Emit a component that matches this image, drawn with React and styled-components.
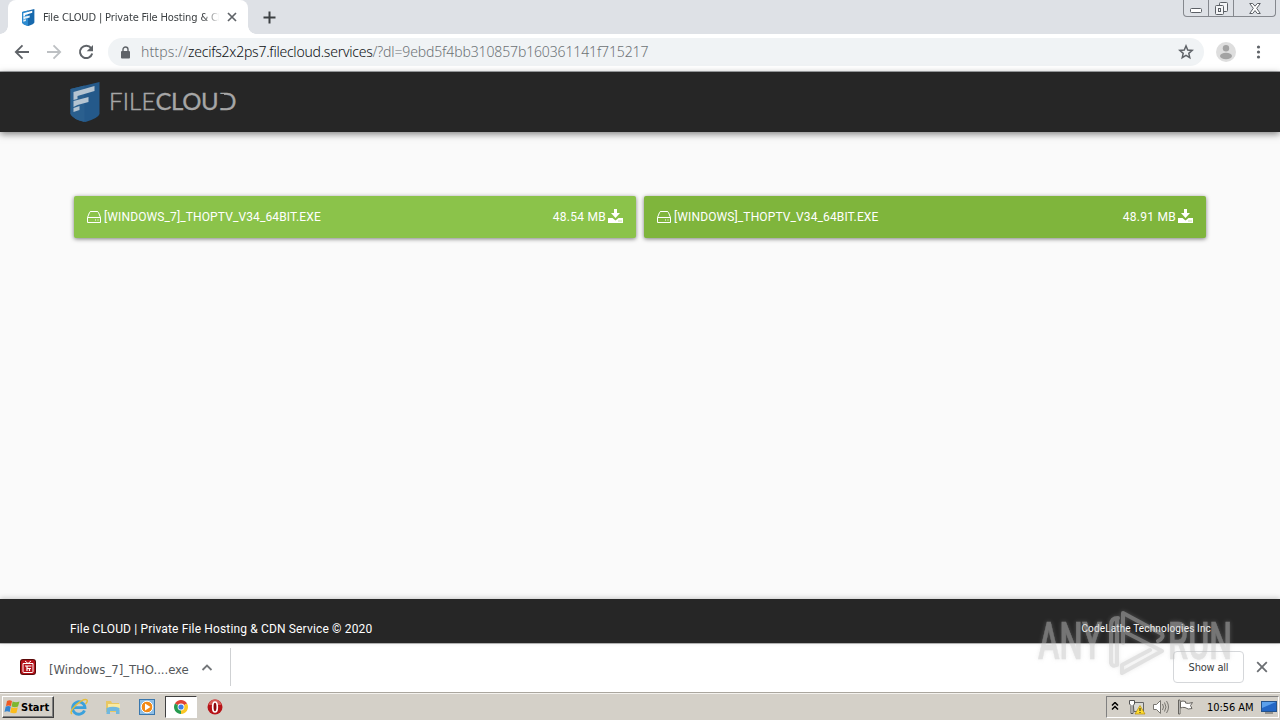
import React from 'react';
import styled, {createGlobalStyle, css} from 'styled-components';

const GlobalStyle = createGlobalStyle`
    * {
        box-sizing: border-box;
    }

    body {
        margin: 0;
        overflow: hidden;
        background-color: #fafafa;
        font-family: "DejaVu Sans Condensed", "DejaVu Sans", sans-serif;
    }

    svg {
        display: block;
        flex: none;
    }
`;

const Screen = styled.div`
    display: flex;
    flex-direction: column;
    width: 1280px;
    height: 720px;
    overflow: hidden;
`;

/* Browser */

const TabStrip = styled.div`
    display: flex;
    flex: none;
    height: 34px;
    padding-left: 8px;
    background-color: #dee1e6;
`;

const Tab = styled.div`
    position: relative;
    display: flex;
    align-items: center;
    width: 240px;
    height: 34px;
    padding: 0 10px 0 13px;
    background-color: #fff;
    border-radius: 8px 8px 0 0;

    &::before,
    &::after {
        content: '';
        position: absolute;
        bottom: 0;
        width: 8px;
        height: 8px;
    }

    &::before {
        left: -8px;
        background: radial-gradient(circle at 0 0, transparent 7.5px, #fff 8px);
    }

    &::after {
        right: -8px;
        background: radial-gradient(circle at 100% 0, transparent 7.5px, #fff 8px);
    }
`;

const TabTitle = styled.div`
    width: 176px;
    margin: 0 8px 0 8px;
    padding-top: 1px;
    overflow: hidden;
    white-space: nowrap;
    font-family: "DejaVu Sans Condensed", sans-serif;
    font-size: 11px;
    letter-spacing: -0.14px;
    line-height: 16px;
    color: #3c4043;
    mask-image: linear-gradient(to right, #000 160px, transparent 178px);
`;

const NewTab = styled.div`
    display: flex;
    align-items: center;
    margin-left: 15px;
`;

const WindowButtons = styled.div`
    display: flex;
    height: 17px;
    margin: 0 4px 0 auto;
    border: 1px solid #85888e;
    border-top: 0;
    border-radius: 0 0 4px 4px;
`;

const WindowButton = styled.div`
    display: flex;
    align-items: center;
    justify-content: center;
    width: ${props => props.$width}px;
    padding-top: ${props => props.$drop || 0}px;

    & + & {
        border-left: 1px solid #85888e;
    }
`;

const Toolbar = styled.div`
    display: flex;
    flex: none;
    align-items: center;
    height: 38px;
    padding: 0 14px 1px;
    background-color: #fff;
    border-bottom: 1px solid #a9abad;
`;

const NavButtons = styled.div`
    display: flex;
    gap: 16px;
    margin-right: 14px;
`;

const AddressBar = styled.div`
    display: flex;
    align-items: center;
    width: 1096px;
    height: 28px;
    padding: 0 10px 0 12px;
    background-color: #f0f3f5;
    border-radius: 14px;
`;

const Url = styled.div`
    margin: 0 auto 0 10px;
    font-family: "Noto Sans", sans-serif;
    font-size: 14px;
    font-weight: 300;
    letter-spacing: -0.13px;
    line-height: 20px;
    white-space: nowrap;
    color: #6d7276;

    b {
        font-weight: 300;
        letter-spacing: -0.24px;
        color: #0d0f12;
    }
`;

const Scheme = styled.span`
    letter-spacing: 0.13px;
`;

const ToolbarEnd = styled.div`
    display: flex;
    align-items: center;
    gap: 14px;
    margin-left: 12px;
`;

/* Page */

const Header = styled.header`
    position: relative;
    display: flex;
    flex: none;
    align-items: center;
    height: 60px;
    padding-left: 69px;
    background-color: #262626;
    box-shadow: 0 2px 7px rgba(0, 0, 0, 0.5);
`;

const Brand = styled.div`
    position: relative;
    margin-left: 9px;
    padding-bottom: 2px;
    font-family: Lato, sans-serif;
    font-size: 24px;
    font-weight: 300;
    letter-spacing: 0.15px;
    line-height: 30px;
    color: #a6a6a6;
    -webkit-text-stroke: 0.5px #a6a6a6;

    b {
        font-weight: 400;
        letter-spacing: -0.4px;
        -webkit-text-stroke-width: 0.3px;
    }
`;

const OpenLetter = styled.b`
    position: relative;

    &::after {
        content: '';
        position: absolute;
        top: 8px;
        left: 0;
        width: 6px;
        height: 14px;
        background-color: #262626;
    }
`;

const Main = styled.main`
    display: flex;
    flex: 1;
    align-items: flex-start;
    gap: 8px;
    padding: 64px 74px 0;
    background-color: #fafafa;
`;

const FileButton = styled.div`
    display: flex;
    align-items: center;
    width: 562px;
    height: 42px;
    padding: 0 13px;
    border-radius: 2px;
    background-color: ${props => props.$active ? '#8bc34a' : '#7fb53c'};
    box-shadow: 0 1px 4px rgba(0, 0, 0, 0.5);
    font-family: Roboto, sans-serif;
    font-size: 12px;
    line-height: 16px;
    color: #fff;
`;

const FileName = styled.span`
    margin: 0 auto 0 3px;
    letter-spacing: 0.12px;
`;

const FileSize = styled.span`
    margin-right: 2px;
    letter-spacing: 0.28px;
`;

const Footer = styled.footer`
    position: relative;
    display: flex;
    flex: none;
    justify-content: space-between;
    height: 44px;
    padding: 22px 69px 0 70px;
    background-color: #262626;
    box-shadow: 0 -1px 5px rgba(0, 0, 0, 0.2);
    font-family: Roboto, sans-serif;
    font-size: 12px;
    line-height: 16px;
    color: #fff;
`;

const Copyright = styled.span`
    letter-spacing: 0.15px;
`;

const Company = styled.span`
    font-size: 10px;
    letter-spacing: 0.15px;
`;

/* Downloads */

const Shelf = styled.div`
    display: flex;
    flex: none;
    align-items: center;
    height: 50px;
    padding: 0 12px 2px 0;
    background-color: #fff;
    border-top: 1px solid #bcbcbc;
    border-bottom: 1px solid #aaa69e;
`;

const Download = styled.div`
    display: flex;
    align-items: center;
    width: 231px;
    height: 38px;
    padding-left: 20px;
    border-right: 1px solid #cfd1d3;
`;

const DownloadName = styled.span`
    width: 140px;
    margin: 4px 12px 0 13px;
    font-family: "DejaVu Sans Condensed", sans-serif;
    font-size: 13px;
    letter-spacing: -0.04px;
    white-space: nowrap;
    color: #55585b;
`;

const ShowAll = styled.div`
    display: flex;
    align-items: center;
    justify-content: center;
    width: 71px;
    height: 32px;
    margin: 0 12px 0 auto;
    border: 1px solid #d5d7da;
    border-radius: 4px;
    font-size: 11px;
    letter-spacing: -0.2px;
    color: #3a3d40;
`;

/* Taskbar */

const Taskbar = styled.div`
    display: flex;
    flex: none;
    align-items: center;
    height: 27px;
    padding: 0 1px 0 2px;
    background-color: #d4d0c8;
    border-top: 1px solid #f4f2ee;
`;

const raised = css`
    border: 1px solid;
    border-color: #fff #404040 #404040 #fff;
    box-shadow: inset -1px -1px #808080;
`;

const StartButton = styled.div`
    display: flex;
    align-items: center;
    gap: 1px;
    width: 52px;
    height: 22px;
    padding-left: 1px;
    font-size: 11px;
    font-weight: bold;
    letter-spacing: 0;
    color: #000;
    ${raised}
`;

const TaskButton = styled.div`
    display: flex;
    align-items: center;
    justify-content: center;
    width: ${props => props.$active ? 32 : 34}px;
    height: 22px;

    ${props => props.$active && css`
        margin: 0 1px;
        background-color: #fff;
        border: 1px solid;
        border-color: #404040 #fff #fff #404040;
    `}
`;

const TaskButtons = styled.div`
    display: flex;
    margin-left: 8px;
`;

const Tray = styled.div`
    display: flex;
    align-items: center;
    width: 173px;
    height: 22px;
    margin-left: auto;
    padding-left: 4px;
    border: 1px solid;
    border-color: #808080 #fff #fff #808080;
`;

const TrayIcons = styled.div`
    display: flex;
    align-items: center;
    gap: 7px;

    svg:first-child {
        margin-right: 2px;
    }
`;

const Clock = styled.span`
    width: 47px;
    margin: 0 7px 0 13px;
    font-size: 11px;
    letter-spacing: -0.05px;
    white-space: nowrap;
    color: #000;
`;

const Watermark = styled.div`
    position: absolute;
    left: 1032px;
    top: 605px;
    opacity: 0.5;
    filter: drop-shadow(0 0 2px rgba(190, 190, 190, 0.6));
`;

const CloudLogo = ({width, height, bright}) => (
    <svg width={width} height={height} viewBox="0 0 30 40">
        <path d="M1 7 L30 0 V32 Q29 36 16 40 Q3 37 1 32Z" fill={bright ? '#1769ad' : '#24598a'} />
        <path d="M1 7 L15 3.5 V40 Q3 37 1 32Z" fill={bright ? '#2d8bd0' : '#2a5f8e'} />
        <path d="M4 10 L25 4 V9 L8 14 V17 L4 18Z" fill={bright ? '#fff' : '#b5c4d1'} />
        <path d="M4 19 L19 15 V20 L8 23 L4 25Z" fill={bright ? '#e5f1fa' : '#b5c4d1'} />
        <path d="M4 26 L10 24 V28 L4 30Z" fill={bright ? '#e5f1fa' : '#b5c4d1'} />
    </svg>
);

const Cross = ({size, color, stroke = 2}) => (
    <svg width={size} height={size} viewBox="0 0 10 10">
        <path d="M1 1 L9 9 M9 1 L1 9" stroke={color} strokeWidth={stroke} />
    </svg>
);

const Drive = () => (
    <svg width="14" height="12" viewBox="0 0 14 12" fill="none" stroke="#fff">
        <path d="M.5 6.5 L2.5 1.5 Q2.7 .5 4 .5 H10 Q11.3 .5 11.5 1.5 L13.5 6.5 V11.5 H.5Z M.5 6.5 H13.5" />
        <path d="M8 9 H9 M10.5 9 H11.5" />
    </svg>
);

const DownloadIcon = () => (
    <svg width="15" height="16" viewBox="0 0 15 16" fill="#fff">
        <path d="M6 0 H9 V4 H12 L7.5 9 L3 4 H6Z" />
        <path d="M0 9 H4.5 L7.5 11.5 L10.5 9 H15 V14 H0Z" />
        <path d="M10.5 12 H11.5 M12.5 12 H13.5" stroke="#82b83f" />
    </svg>
);

const files = [
    {name: '[WINDOWS_7]_THOPTV_V34_64BIT.EXE', size: '48.54 MB', active: true},
    {name: '[WINDOWS]_THOPTV_V34_64BIT.EXE', size: '48.91 MB', active: false},
];

function Browser() {
    return (
        <>
            <TabStrip>
                <Tab>
                    <CloudLogo width={14} height={17} bright />
                    <TabTitle>File CLOUD | Private File Hosting &amp; CDN Service</TabTitle>
                    <Cross size={10} color="#5f6368" stroke={1.7} />
                </Tab>
                <NewTab>
                    <svg width="13" height="13" viewBox="0 0 13 13">
                        <path d="M6.5 .5 V12.5 M.5 6.5 H12.5" stroke="#3c4043" strokeWidth="2" />
                    </svg>
                </NewTab>
                <WindowButtons>
                    <WindowButton $width={24} $drop={4}>
                        <svg width="12" height="5" viewBox="0 0 12 5">
                            <rect x=".5" y=".5" width="11" height="4" rx="1" fill="#fff" stroke="#5c6066" />
                        </svg>
                    </WindowButton>
                    <WindowButton $width={25}>
                        <svg width="13" height="13" viewBox="0 0 13 13" fill="#f4f5f7" stroke="#5c6066">
                            <rect x="4.5" y=".5" width="8" height="9" rx="1" />
                            <rect x=".5" y="3.5" width="8" height="9" rx="1" />
                            <rect x="3.5" y="6.5" width="2" height="3" />
                        </svg>
                    </WindowButton>
                    <WindowButton $width={42}>
                        <svg width="12" height="11" viewBox="0 0 12 11">
                            <path d="M.7 .5 H3.7 L6 3.2 L8.3 .5 H11.3 L7.7 5.3 L11.3 10.5 H8.3 L6 7.6 L3.7 10.5 H.7 L4.3 5.3Z" fill="#fff" stroke="#5c6066" />
                        </svg>
                    </WindowButton>
                </WindowButtons>
            </TabStrip>
            <Toolbar>
                <NavButtons>
                    <svg width="16" height="16" viewBox="0 0 16 16" fill="none" stroke="#5f6368" strokeWidth="1.8">
                        <path d="M15 8 H2 M8.5 1.3 L1.8 8 L8.5 14.7" />
                    </svg>
                    <svg width="16" height="16" viewBox="0 0 16 16" fill="none" stroke="#bdc0c3" strokeWidth="1.8">
                        <path d="M1 8 H14 M7.5 1.3 L14.2 8 L7.5 14.7" />
                    </svg>
                    <svg width="16" height="16" viewBox="0 0 16 16">
                        <path d="M13.2 4.2 A6.2 6.2 0 1 0 14.2 9.5" fill="none" stroke="#5f6368" strokeWidth="2" />
                        <path d="M15 1 V7.3 H8.7Z" fill="#5f6368" />
                    </svg>
                </NavButtons>
                <AddressBar>
                    <svg width="11" height="13" viewBox="0 0 11 13">
                        <rect x="1" y="5" width="9" height="7.5" rx="1" fill="#5f6368" />
                        <path d="M3 6 V3.5 A2.5 2.5 0 0 1 8 3.5 V6" fill="none" stroke="#5f6368" strokeWidth="1.4" />
                    </svg>
                    <Url><Scheme>https://</Scheme><b>zecifs2x2ps7.filecloud.services</b>/?dl=9ebd5f4bb310857b160361141f715217</Url>
                    <svg width="16" height="16" viewBox="0 0 24 24">
                        <path d="M12 2.8 L14.6 9 L21.3 9.6 L16.2 14 L17.7 20.6 L12 17.1 L6.3 20.6 L7.8 14 L2.7 9.6 L9.4 9Z" fill="none" stroke="#5f6368" strokeWidth="2.2" />
                    </svg>
                </AddressBar>
                <ToolbarEnd>
                    <svg width="20" height="20" viewBox="0 0 20 20">
                        <circle cx="10" cy="10" r="10" fill="#dedede" />
                        <circle cx="10" cy="6.3" r="3.2" fill="#a3a3a3" />
                        <ellipse cx="10" cy="14" rx="6" ry="3.2" fill="#a3a3a3" />
                    </svg>
                    <svg width="16" height="16" viewBox="0 0 16 16" fill="#5f6368">
                        <circle cx="8.5" cy="3" r="1.6" />
                        <circle cx="8.5" cy="8" r="1.6" />
                        <circle cx="8.5" cy="13" r="1.6" />
                    </svg>
                </ToolbarEnd>
            </Toolbar>
        </>
    );
}

function Page() {
    return (
        <>
            <Header>
                <CloudLogo width={31} height={40} />
                <Brand>FILE<b>CLOU</b><OpenLetter>D</OpenLetter></Brand>
            </Header>
            <Main>
                {files.map(file => (
                    <FileButton key={file.name} $active={file.active}>
                        <Drive />
                        <FileName>{file.name}</FileName>
                        <FileSize>{file.size}</FileSize>
                        <DownloadIcon />
                    </FileButton>
                ))}
            </Main>
            <Footer>
                <Copyright>File CLOUD | Private File Hosting &amp; CDN Service © 2020</Copyright>
                <Company>CodeLathe Technologies Inc</Company>
            </Footer>
        </>
    );
}

function DownloadShelf() {
    return (
        <Shelf>
            <Download>
                <svg width="16" height="16" viewBox="0 0 16 16">
                    <rect width="16" height="16" rx="3" fill="#5a0808" />
                    <rect x="1" y="1" width="14" height="14" rx="2" fill="#b5121a" />
                    <path d="M3 4.5 H13 V12.5 Q13 13.5 12 13.5 H4 Q3 13.5 3 12.5Z M5 2 L8 4.5 L11 2" fill="none" stroke="#fff" />
                    <path d="M5 7 H11.5 M7 7 V12 M9.5 9.5 V12 M7 9.5 H11" stroke="#fff" strokeWidth="1.2" />
                </svg>
                <DownloadName>[Windows_7]_THO....exe</DownloadName>
                <svg width="12" height="8" viewBox="0 0 12 8">
                    <path d="M1.5 7 L6 2.5 L10.5 7" fill="none" stroke="#74777a" strokeWidth="1.8" />
                </svg>
            </Download>
            <ShowAll>Show all</ShowAll>
            <Cross size={12} color="#6b6e72" stroke={1.5} />
        </Shelf>
    );
}

function StartBar() {
    return (
        <Taskbar>
            <StartButton>
                <svg width="16" height="16" viewBox="0 0 16 16">
                    <path d="M3 2 Q5.5 .5 8 2 L7 7 Q4.5 5.8 2 7Z" fill="#ef5a24" />
                    <path d="M8.6 2.5 Q12 4 15.5 2.5 L14 7.5 Q11 9 7.6 7.5Z" fill="#7db72f" />
                    <path d="M1.7 7.6 Q4.5 6.4 6.8 7.6 L5.7 13 Q3 11.6 .5 13Z" fill="#3484d0" />
                    <path d="M7.4 8.2 Q11 9.6 13.8 8.2 L12.5 13.7 Q9.5 15 6.2 13.5Z" fill="#fbbc1c" />
                </svg>
                Start
            </StartButton>
            <TaskButtons>
                <TaskButton>
                    <svg width="18" height="18" viewBox="0 0 18 18">
                        <path d="M14.5 12.5 A6.2 6.2 0 1 1 15 9.6 H4" fill="none" stroke="#3ba1dc" strokeWidth="2.8" />
                        <path d="M2 16 Q-1 14 6 7 Q14 0 17 2 Q18 3.5 15.5 6" fill="none" stroke="#e5bd38" strokeWidth="1.4" />
                    </svg>
                </TaskButton>
                <TaskButton>
                    <svg width="18" height="18" viewBox="0 0 18 18">
                        <path d="M2 3 H7 L8 5 H15 V14 H2Z" fill="#e8c763" />
                        <path d="M4 6 H16 V12 H4Z" fill="#faeaa0" />
                        <path d="M2.5 10 Q9 7.5 15.5 10 V16 H12 V13 H6 V16 H2.5Z" fill="#70b8df" />
                    </svg>
                </TaskButton>
                <TaskButton>
                    <svg width="16" height="16" viewBox="0 0 16 16">
                        <rect x=".5" y=".5" width="15" height="15" fill="#8fbfe5" stroke="#3977ad" />
                        <circle cx="8" cy="8" r="5.8" fill="#f28a16" stroke="#fff" />
                        <path d="M6 4.5 L11.5 8 L6 11.5Z" fill="#fff" />
                    </svg>
                </TaskButton>
                <TaskButton $active>
                    <svg width="14" height="14" viewBox="0 0 14 14">
                        <path d="M7 7 L.94 3.5 A7 7 0 0 1 13.06 3.5Z" fill="#df4335" />
                        <path d="M7 7 L13.06 3.5 A7 7 0 0 1 7 14Z" fill="#fbc725" />
                        <path d="M7 7 V14 A7 7 0 0 1 .94 3.5Z" fill="#269b4f" />
                        <circle cx="7" cy="7" r="3.4" fill="#fff" />
                        <circle cx="7" cy="7" r="2.6" fill="#3d7fe6" />
                    </svg>
                </TaskButton>
                <TaskButton>
                    <svg width="16" height="16" viewBox="0 0 16 16">
                        <circle cx="8" cy="8" r="7.5" fill="#b71318" />
                        <path d="M1.5 6 Q3 .6 8 .6 Q13 .6 14.5 6Z" fill="#d75a55" />
                        <ellipse cx="8" cy="8" rx="2.3" ry="5" fill="#8d080c" stroke="#fff" strokeWidth="1.7" />
                    </svg>
                </TaskButton>
            </TaskButtons>
            <Tray>
                <TrayIcons>
                    <svg width="8" height="10" viewBox="0 0 8 10">
                        <path d="M1 3.5 L4 .5 L7 3.5 M1 7.5 L4 4.5 L7 7.5" fill="none" stroke="#000" strokeWidth="1.5" />
                    </svg>
                    <svg width="18" height="16" viewBox="0 0 18 16">
                        <path d="M5 3.5 H15.5 V12.5 H6Z" fill="#d9d9d4" stroke="#666" />
                        <path d="M1.5 1.5 H6.5 V5 L5 6.5 V14.5 H3 V6.5 L1.5 5Z" fill="#fff" stroke="#555" />
                        <path d="M12 6.5 L17 15 H7Z" fill="#ffdc2e" stroke="#b38b0c" strokeWidth=".7" />
                        <path d="M12 9 V12 M12 13 V14" stroke="#222" />
                    </svg>
                    <svg width="17" height="16" viewBox="0 0 17 16" fill="none" stroke="#77756f">
                        <path d="M.5 5.5 H3.5 L7.5 1.5 V14.5 L3.5 10.5 H.5Z" fill="#fff" />
                        <path d="M9.5 5 Q11.5 8 9.5 11 M11.5 3.5 Q14.5 8 11.5 12.5 M13.5 2 Q17.5 8 13.5 14" />
                    </svg>
                    <svg width="17" height="16" viewBox="0 0 17 16" fill="#fff" stroke="#66645f">
                        <path d="M1.5 1 H3 V15 H1.5Z" />
                        <path d="M3.5 2.5 Q6 1.5 8.5 2.5 V4 Q11 5 15.5 3.5 L13.5 6.5 L15 9.5 Q11 11 8 8.5 Q5.5 8 3.5 9Z" />
                    </svg>
                </TrayIcons>
                <Clock>10:56 AM</Clock>
                <svg width="16" height="14" viewBox="0 0 16 14">
                    <rect x=".5" y="1.5" width="15" height="10" fill="#2367c5" stroke="#24538b" />
                    <path d="M1 2 H15 L1 8Z" fill="#5ba0eb" />
                    <path d="M4 13 H12" stroke="#555" />
                </svg>
            </Tray>
        </Taskbar>
    );
}

const Mark = () => (
    <Watermark>
        <svg width="206" height="74" viewBox="0 0 206 74">
            <g fontFamily="Roboto" fontSize="52" fontWeight="500" fill="#c4c4c4" stroke="#c4c4c4" strokeWidth=".6">
                <text x="6" y="54" textLength="64" lengthAdjust="spacingAndGlyphs">ANY</text>
                <text x="136" y="54" textLength="64" lengthAdjust="spacingAndGlyphs">RUN</text>
            </g>
            <g fill="none" stroke="#c4c4c4" strokeWidth="4" strokeLinejoin="round" strokeLinecap="round">
                <path d="M86 13 Q79 13 79 20 V58 Q80 62 85 60 V15" />
                <path d="M91 38 V8 L130 29 Q132 33 126 36" />
                <path d="M91 26 L130 46 L90 68 V60 L118 45" />
            </g>
        </svg>
    </Watermark>
);

function App() {
    return (
        <Screen>
            <GlobalStyle />
            <Browser />
            <Page />
            <DownloadShelf />
            <StartBar />
            <Mark />
        </Screen>
    );
}

export default App;
